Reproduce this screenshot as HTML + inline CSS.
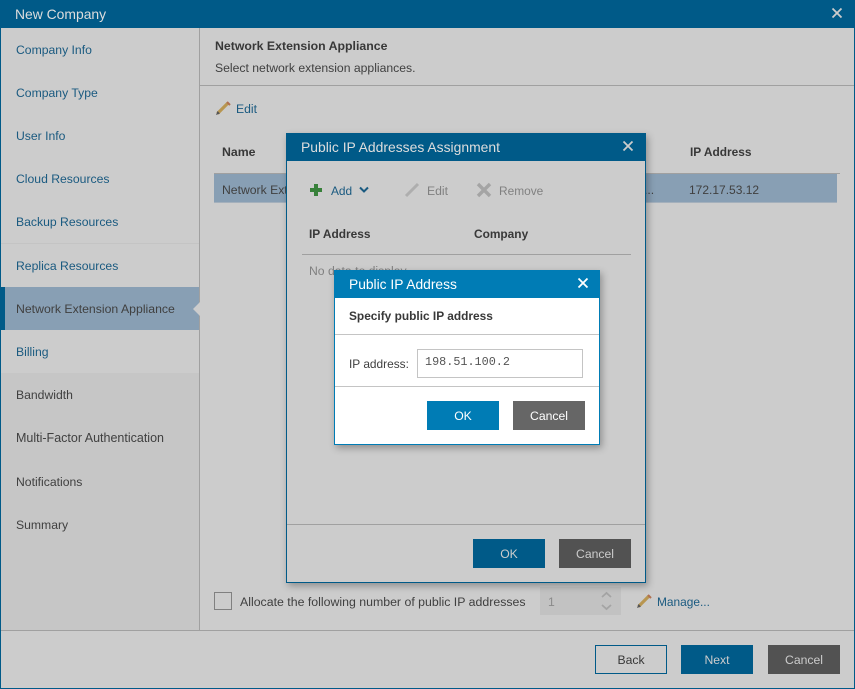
<!DOCTYPE html>
<html><head><meta charset="utf-8"><style>
html,body{margin:0;padding:0}
body{width:855px;height:689px;position:relative;overflow:hidden;background:#ccc;font-family:"Liberation Sans",sans-serif;font-size:12.2px;color:#404040}
div,span,svg{position:absolute;box-sizing:border-box}
.t{white-space:nowrap;line-height:16px;height:16px}
.l{color:#1a5a80}
.b{font-weight:bold;color:#383838;font-size:11.9px}
.h{font-size:13.9px}
.btn{text-align:center;line-height:31px;height:29px;width:72px}
</style></head><body>
<!-- main window -->
<div style="left:0;top:0;width:855px;height:689px;border:1px solid #005a88;border-top:0"></div>
<div style="left:0;top:0;width:855px;height:28px;background:#005a88"></div>
<span class="t h" style="left:15px;top:6px;color:#ddd">New Company</span>
<svg style="left:830px;top:6px" width="14" height="14" viewBox="0 0 14 14"><path d="M2.500 2.500L11.500 11.500M11.500 2.500L2.500 11.500" stroke="#ccc" stroke-width="1.800"/></svg>
<!-- sidebar -->
<div style="left:1px;top:373px;width:198px;height:257px;background:#c6c6c6"></div>
<div style="left:1px;top:243px;width:198px;height:1px;background:#c4c4c4"></div>
<div style="left:199px;top:28px;width:1px;height:602px;background:#a0a0a0"></div>
<div style="left:1px;top:287px;width:198px;height:43px;background:#889fb4"></div>
<div style="left:1px;top:287px;width:4px;height:43px;background:#005a88"></div>
<svg style="left:192px;top:301px" width="8" height="16" viewBox="0 0 8 16"><path d="M8 1L1 8L8 15Z" fill="#ccc"/></svg>
<span class="t l" style="left:16px;top:42px">Company Info</span>
<span class="t l" style="left:16px;top:85px">Company Type</span>
<span class="t l" style="left:16px;top:128px">User Info</span>
<span class="t l" style="left:16px;top:171px">Cloud Resources</span>
<span class="t l" style="left:16px;top:214px">Backup Resources</span>
<span class="t l" style="left:16px;top:258px">Replica Resources</span>
<span class="t" style="left:16px;top:301px;font-size:12.270px">Network Extension Appliance</span>
<span class="t l" style="left:16px;top:344px">Billing</span>
<span class="t" style="left:16px;top:387px">Bandwidth</span>
<span class="t" style="left:16px;top:430px;font-size:12.500px">Multi-Factor Authentication</span>
<span class="t" style="left:16px;top:474px">Notifications</span>
<span class="t" style="left:16px;top:517px">Summary</span>
<!-- content header -->
<span class="t b" style="left:215px;top:38px;font-size:12.300px">Network Extension Appliance</span>
<span class="t" style="left:215px;top:60px;font-size:12.200px">Select network extension appliances.</span>
<div style="left:200px;top:85px;width:654px;height:1px;background:#a0a0a0"></div>
<svg style="left:215px;top:100px" width="16" height="16" viewBox="0 0 16 16"><path d="M2.500 13.500L13 3" stroke="#b89650" stroke-width="3.200"/><path d="M12 2L15 5" stroke="#b07050" stroke-width="2"/><path d="M1 15L2.500 11L5 13.500Z" fill="#555"/></svg>
<span class="t l" style="left:236px;top:101px">Edit</span>
<!-- table -->
<span class="t b" style="left:222px;top:144px;font-size:12.300px">Name</span>
<span class="t b" style="left:690px;top:144px">IP Address</span>
<div style="left:214px;top:173px;width:626px;height:1px;background:#a0a0a0"></div>
<div style="left:214px;top:174px;width:623px;height:29px;background:#889fb4;border-bottom:1px solid #a4b0bc"></div>
<span class="t" style="left:222px;top:182px">Network Ext</span>
<span class="t" style="left:644px;top:182px">...</span>
<span class="t" style="left:689px;top:182px;font-size:12px">172.17.53.12</span>
<!-- bottom -->
<div style="left:214px;top:592px;width:18px;height:18px;border:1px solid #808080"></div>
<span class="t" style="left:240px;top:594px;font-size:12.330px">Allocate the following number of public IP addresses</span>
<div style="left:540px;top:587px;width:81px;height:28px;background:#c2c2c2"></div>
<span class="t" style="left:548px;top:594px;color:#8a8a8a">1</span>
<svg style="left:600px;top:590px" width="14" height="24" viewBox="0 0 14 24"><path d="M2 7L6.500 3L11 7M2 15L6.500 19L11 15" fill="none" stroke="#a4a4a4" stroke-width="1.800"/></svg>
<svg style="left:636px;top:593px" width="16" height="16" viewBox="0 0 16 16"><path d="M2.500 13.500L13 3" stroke="#b89650" stroke-width="3.200"/><path d="M12 2L15 5" stroke="#b07050" stroke-width="2"/><path d="M1 15L2.500 11L5 13.500Z" fill="#555"/></svg>
<span class="t l" style="left:657px;top:594px;font-size:11.900px">Manage...</span>
<div style="left:1px;top:630px;width:853px;height:1px;background:#a0a0a0"></div>
<div class="btn" style="left:595px;top:645px;border:1px solid #005a88;line-height:29px;color:#383838">Back</div>
<div class="btn" style="left:681px;top:645px;background:#005a88;color:#ccc">Next</div>
<div class="btn" style="left:768px;top:645px;background:#525252;color:#ccc">Cancel</div>
<!-- dialog 1 -->
<div style="left:286px;top:133px;width:360px;height:450px;background:#ccc;border:1px solid #005a88;box-shadow:2px 3px 7px rgba(0,0,0,.3)"></div>
<div style="left:286px;top:133px;width:360px;height:28px;background:#005a88"></div>
<span class="t h" style="left:301px;top:138.500px;color:#ddd">Public IP Addresses Assignment</span>
<svg style="left:621px;top:139px" width="14" height="14" viewBox="0 0 14 14"><path d="M2.500 2.500L11.500 11.500M11.500 2.500L2.500 11.500" stroke="#ccc" stroke-width="1.800"/></svg>
<svg style="left:309px;top:183px" width="14" height="14" viewBox="0 0 14 14"><path d="M7 1V13M1 7H13" stroke="#38803a" stroke-width="4"/></svg>
<span class="t l" style="left:331px;top:183px;font-size:11.900px">Add</span>
<svg style="left:358px;top:185px" width="12" height="10" viewBox="0 0 12 10"><path d="M2 2.500L6 6.500L10 2.500" fill="none" stroke="#1a5a80" stroke-width="2"/></svg>
<svg style="left:404px;top:182px" width="16" height="16" viewBox="0 0 16 16"><path d="M2 14L14 2" stroke="#aeaeae" stroke-width="3"/></svg>
<span class="t" style="left:427px;top:183px;color:#808080">Edit</span>
<svg style="left:476px;top:182px" width="16" height="16" viewBox="0 0 16 16"><path d="M2 2L14 14M14 2L2 14" stroke="#a4a4a4" stroke-width="3.400"/></svg>
<span class="t" style="left:499px;top:183px;color:#808080;font-size:11.900px">Remove</span>
<span class="t b" style="left:309px;top:226px">IP Address</span>
<span class="t b" style="left:474px;top:226px">Company</span>
<div style="left:302px;top:254px;width:329px;height:1px;background:#a0a0a0"></div>
<span class="t" style="left:309px;top:263px;color:#808080">No data to display</span>
<div style="left:287px;top:524px;width:358px;height:1px;background:#a0a0a0"></div>
<div class="btn" style="left:473px;top:539px;background:#005a88;color:#ccc">OK</div>
<div class="btn" style="left:559px;top:539px;background:#525252;color:#ccc">Cancel</div>
<!-- dialog 2 -->
<div style="left:334px;top:270px;width:266px;height:175px;background:#fff;border:1px solid #007cb5;box-shadow:2px 3px 7px rgba(0,0,0,.3)"></div>
<div style="left:334px;top:270px;width:266px;height:28px;background:#007cb5"></div>
<span class="t" style="left:349px;top:276.500px;color:#fff;font-size:13.800px">Public IP Address</span>
<svg style="left:576px;top:276px" width="14" height="14" viewBox="0 0 14 14"><path d="M2.500 2.500L11.500 11.500M11.500 2.500L2.500 11.500" stroke="#fff" stroke-width="1.800"/></svg>
<span class="t b" style="left:349px;top:308px">Specify public IP address</span>
<div style="left:335px;top:334px;width:264px;height:1px;background:#c4c4c4"></div>
<span class="t" style="left:349px;top:356px;font-size:11.900px">IP address:</span>
<div style="left:417px;top:349px;width:166px;height:29px;background:#fff;border:1px solid #c4c4c4"></div>
<span class="t" style="left:425px;top:354px;font-family:'Liberation Mono',monospace;font-size:11.800px;color:#555">198.51.100.2</span>
<div style="left:335px;top:386px;width:264px;height:1px;background:#c4c4c4"></div>
<div class="btn" style="left:427px;top:401px;background:#007cb5;color:#fff">OK</div>
<div class="btn" style="left:513px;top:401px;background:#666;color:#fff">Cancel</div>
</body></html>
